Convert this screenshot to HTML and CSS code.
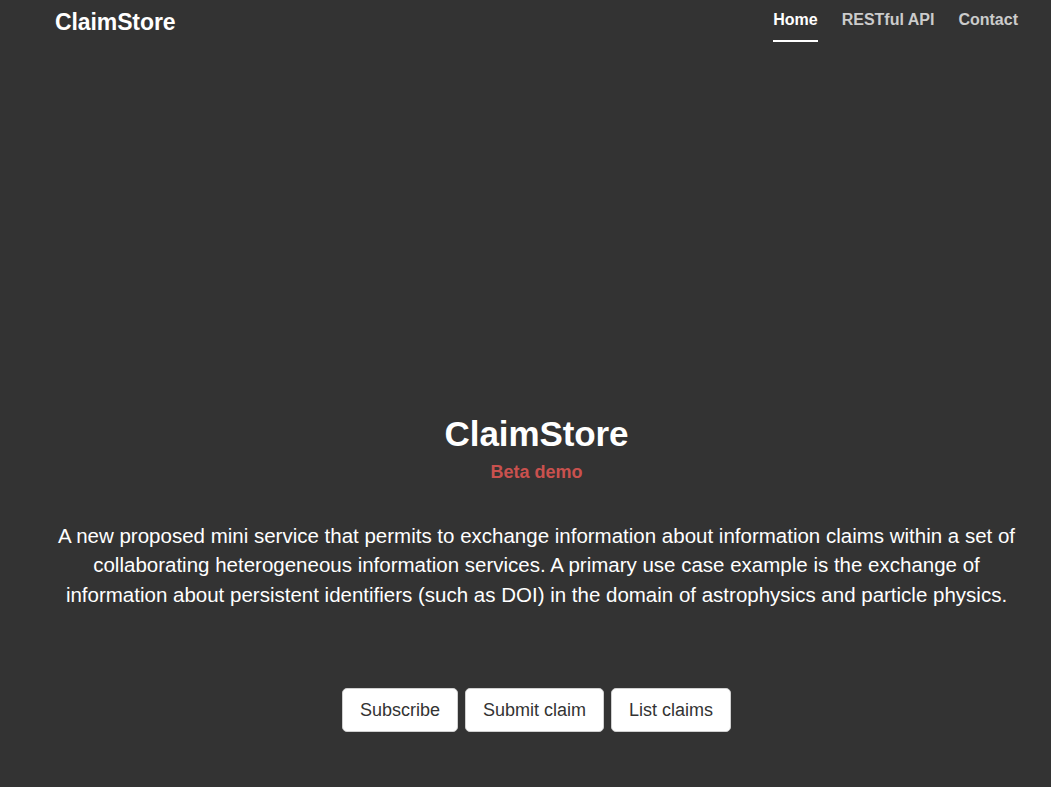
FILE: index.html
```html
<!DOCTYPE html>
<html lang="en">
<head>
<meta charset="utf-8">
<title>ClaimStore</title>
<link rel="stylesheet" href="styles.css">
</head>
<body>
<div class="site">
  <header class="masthead">
    <h3 class="brand">ClaimStore</h3>
    <nav>
      <ul class="nav">
        <li><a class="active" href="#">Home</a></li>
        <li><a href="#">RESTful API</a></li>
        <li><a href="#">Contact</a></li>
      </ul>
    </nav>
  </header>
  <main class="cover">
    <h1 class="cover-title">ClaimStore</h1>
    <h4 class="cover-sub">Beta demo</h4>
    <p class="lead">A new proposed mini service that permits to exchange information about information claims within a set of collaborating heterogeneous information services. A primary use case example is the exchange of information about persistent identifiers (such as DOI) in the domain of astrophysics and particle physics.</p>
    <div class="actions">
      <a class="btn" href="#">Subscribe</a>
      <a class="btn" href="#">Submit claim</a>
      <a class="btn" href="#">List claims</a>
    </div>
  </main>
</div>
</body>
</html>
```
FILE: styles.css
```css
html, body {
  margin: 0;
  padding: 0;
  background: #333333;
}
body {
  color: #ffffff;
  font-family: "Liberation Sans", Arial, Helvetica, sans-serif;
  min-height: 787px;
}
.site {
  padding: 0 33px 0 55px;
}
.masthead {
  display: flex;
  justify-content: space-between;
  align-items: flex-start;
}
.brand {
  margin: 9px 0 0 0;
  font-size: 23px;
  line-height: 26px;
  font-weight: bold;
  letter-spacing: -0.1px;
}
.nav {
  list-style: none;
  margin: 0;
  padding: 0;
  display: flex;
  gap: 24px;
}
.nav a {
  display: block;
  padding: 10px 0;
  font-size: 16px;
  line-height: 20px;
  font-weight: bold;
  color: rgba(255, 255, 255, 0.75);
  text-decoration: none;
  border-bottom: 2px solid transparent;
}
.nav a.active {
  color: #ffffff;
  border-bottom-color: #ffffff;
}
.cover {
  margin-top: 372px;
  text-align: center;
}
.cover-title {
  margin: 0;
  font-size: 35px;
  line-height: 40px;
  font-weight: bold;
  letter-spacing: -0.1px;
}
.cover-sub {
  margin: 8px 0 0 0;
  font-size: 18px;
  line-height: 20px;
  font-weight: bold;
  color: #c9514e;
}
.lead {
  margin: 39px 0 0 0;
  font-size: 20.5px;
  line-height: 29.4px;
  font-weight: normal;
}
.actions {
  margin-top: 79px;
  display: flex;
  justify-content: center;
  gap: 7px;
}
.btn {
  display: inline-block;
  padding: 9px 17px;
  font-size: 18px;
  line-height: 24px;
  color: #333333;
  background: #ffffff;
  border: 1px solid #d0d0d0;
  border-radius: 5px;
  text-decoration: none;
}
```
